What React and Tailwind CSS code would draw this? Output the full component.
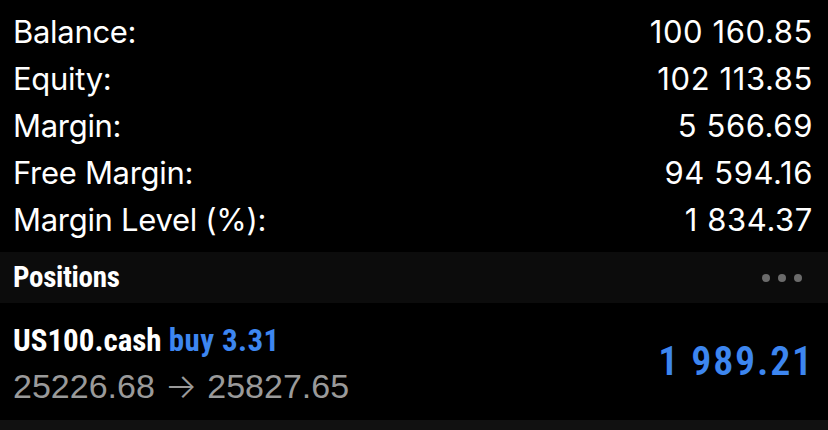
import React from "react";

const rows = [
  ["Balance:", "100 160.85"],
  ["Equity:", "102 113.85"],
  ["Margin:", "5 566.69"],
  ["Free Margin:", "94 594.16"],
  ["Margin Level (%):", "1 834.37"],
];

const cond = { fontFamily: "'Roboto Condensed', Roboto, sans-serif" };

export default function App() {
  return (
    <div className="w-[828px] h-[430px] bg-black overflow-hidden flex flex-col" style={{ fontFamily: "Inter, 'Noto Sans', sans-serif" }}>
      <div className="pt-[8px] pb-[9px]">
        {rows.map(([l, v]) => (
          <div key={l} className="h-[47px] flex items-center justify-between pl-[13px] pr-[15px] text-white text-[31px] leading-[47px]">
            <span className="tracking-[-0.3px]">{l}</span>
            <span className="tracking-[0.6px]">{v}</span>
          </div>
        ))}
      </div>
      <div className="h-[51px] bg-[#0c0c0c] flex items-center justify-between pl-[13px] pr-[26px]">
        <span className="text-white text-[29px] font-bold tracking-[-0.3px]" style={cond}>Positions</span>
        <div className="flex gap-[8px]">
          <span className="w-[8px] h-[8px] rounded-full bg-[#6b6b6b]" />
          <span className="w-[8px] h-[8px] rounded-full bg-[#6b6b6b]" />
          <span className="w-[8px] h-[8px] rounded-full bg-[#6b6b6b]" />
        </div>
      </div>
      <div className="h-[117px] flex items-center justify-between pl-[13px] pr-[14px] pt-[5px]">
        <div className="flex flex-col">
          <div className="text-[31px] font-bold leading-[44px]" style={cond}>
            <span className="text-white">US100.cash</span> <span className="text-[#3d86f0] tracking-[0.4px]">buy 3.31</span>
          </div>
          <div className="text-[34px] leading-[46px] text-[#9a9a9a] flex items-baseline" style={{ fontFamily: "'Liberation Sans', Arial, sans-serif" }}>
            <span>25226.68</span>
            <span className="mx-[10px] font-light" style={{ fontFamily: "Inter, sans-serif" }}>→</span>
            <span>25827.65</span>
          </div>
        </div>
        <div className="text-[40px] font-semibold text-[#3d86f0] tracking-[1.8px] mb-[4px]" style={cond}>1 989.21</div>
      </div>
      <div className="flex-1 bg-[#111111]" />
    </div>
  );
}
